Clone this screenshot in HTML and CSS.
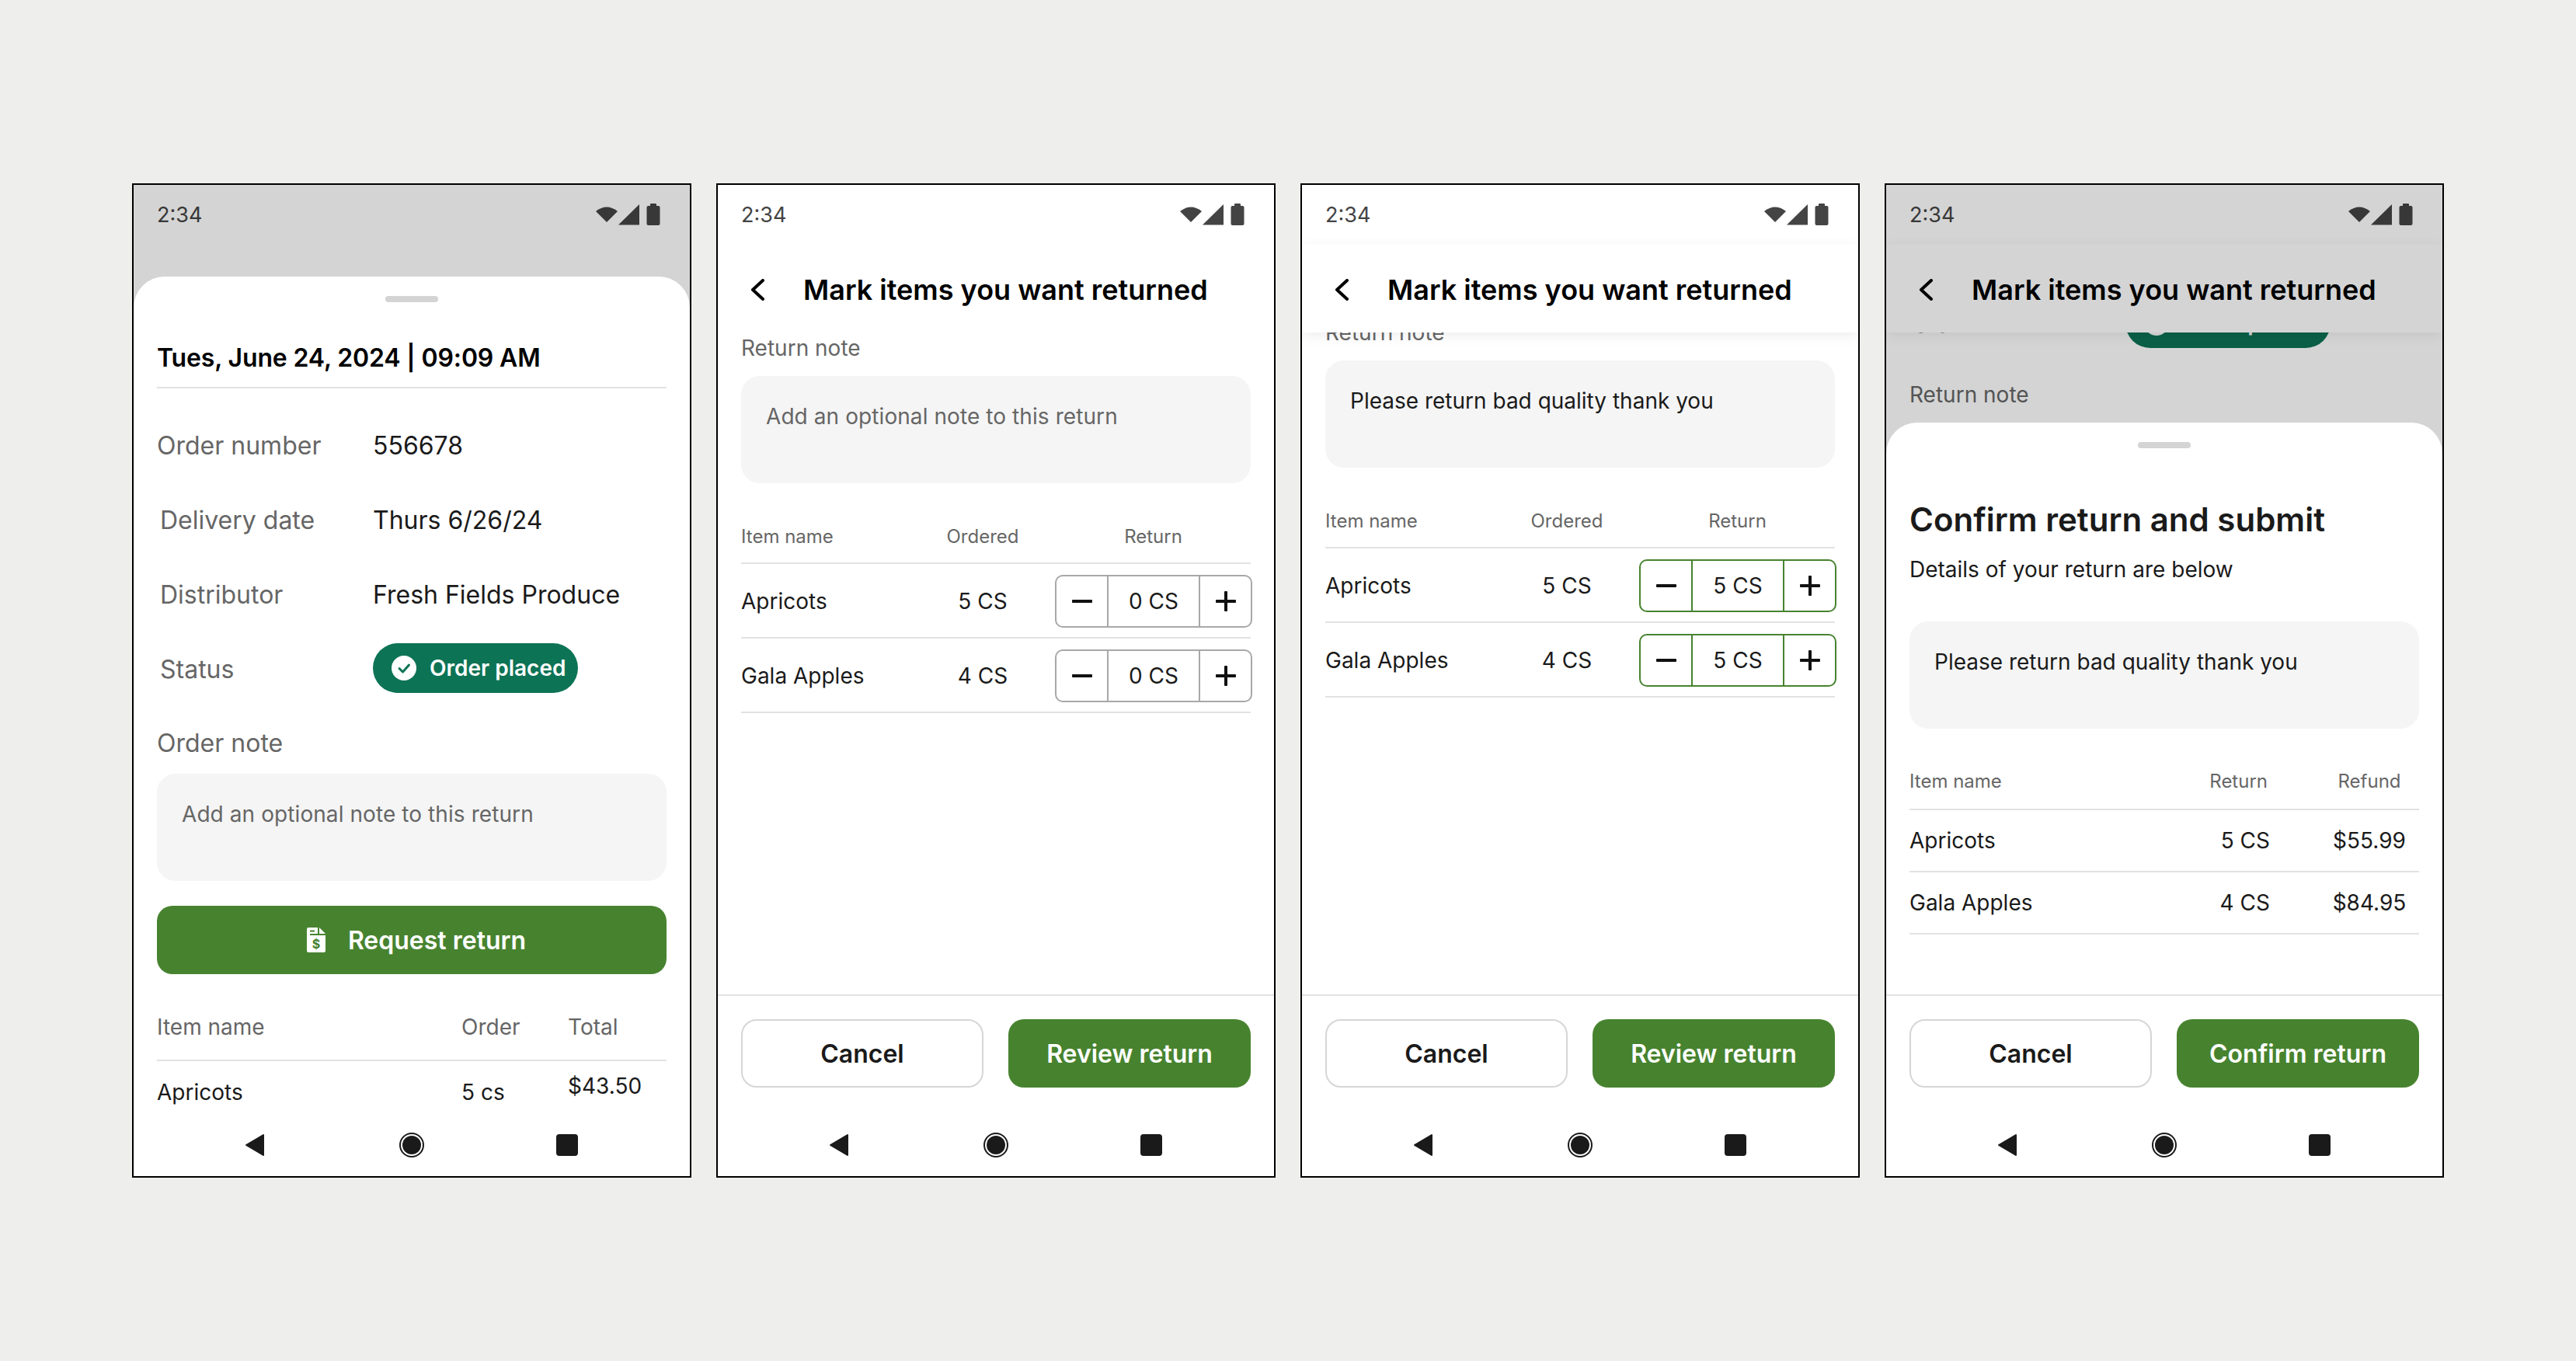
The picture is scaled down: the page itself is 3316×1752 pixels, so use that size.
FILE: index.html
```html
<!DOCTYPE html>
<html lang="en">
<head>
  <meta charset="UTF-8">
  <meta name="viewport" content="width=device-width, initial-scale=1.0">
  <title>Return flow</title>
  <link rel="stylesheet" href="styles.css">
</head>
<body>
  <svg class="defs" width="0" height="0" aria-hidden="true">
    <symbol id="status-icons" viewBox="0 0 84 28">
      <path d="M0 10Q14-1 28 10L14 24Z"/>
      <path d="M29 27.500L56 1V27.500Z"/>
      <rect x="65.500" y="3" width="17" height="25" rx="2"/>
      <rect x="70" y="0" width="8" height="4" rx="1"/>
    </symbol>
    <symbol id="nav-back" viewBox="0 0 32 32">
      <path d="M3 16L25 3V29Z" stroke-linejoin="round" stroke-width="2" stroke="#1a1a1a"/>
    </symbol>
    <symbol id="nav-home" viewBox="0 0 32 32">
      <circle cx="16" cy="16" r="15" fill="#fff" stroke="#1a1a1a" stroke-width="2"/>
      <circle cx="16" cy="16" r="12"/>
    </symbol>
    <symbol id="nav-recent" viewBox="0 0 32 32">
      <rect x="2" y="2" width="28" height="28" rx="4"/>
    </symbol>
    <symbol id="chevron" viewBox="0 0 20 28">
      <path d="M17 2L4 14L17 26" fill="none" stroke="currentColor" stroke-width="4" stroke-linecap="round" stroke-linejoin="round"/>
    </symbol>
    <symbol id="minus" viewBox="0 0 26 26">
      <rect x="0" y="11" width="26" height="4" rx="1"/>
    </symbol>
    <symbol id="plus" viewBox="0 0 26 26">
      <rect x="0" y="11" width="26" height="4" rx="1"/>
      <rect x="11" y="0" width="4" height="26" rx="1"/>
    </symbol>
    <symbol id="pill-check" viewBox="0 0 32 32">
      <circle cx="16" cy="16" r="16" fill="#fff"/>
      <path d="M10 16.500L14.500 21L22.500 12" fill="none" stroke="#0d7355" stroke-width="3" stroke-linecap="round" stroke-linejoin="round"/>
    </symbol>
  </svg>

  <!-- order details -->
  <div class="phone">
    <div class="status-bar">
      <span>2:34</span>
      <svg class="status-icons"><use href="#status-icons"/></svg>
    </div>
    <div class="scrim"></div>
    <div class="sheet sheet-order">
      <div class="handle"></div>
      <div class="sheet-body">
        <div class="date-line">Tues, June 24, 2024 | 09:09 AM</div>
        <div class="info-row"><span class="info-label">Order number</span><span>556678</span></div>
        <div class="info-row"><span class="info-label nudged">Delivery date</span><span>Thurs 6/26/24</span></div>
        <div class="info-row"><span class="info-label nudged">Distributor</span><span>Fresh Fields Produce</span></div>
        <div class="info-row">
          <span class="info-label nudged">Status</span>
          <span class="pill">
            <svg class="pill-check"><use href="#pill-check"/></svg>
            Order placed
          </span>
        </div>
        <div class="section-label order-note-label">Order note</div>
        <div class="note-box placeholder">Add an optional note to this return</div>
        <button class="btn btn-primary btn-wide">
          <svg class="doc-icon" viewBox="0 0 24 32">
            <path fill="#fff" d="M2 0H14V10H24V30a2 2 0 0 1-2 2H2a2 2 0 0 1-2-2V2a2 2 0 0 1 2-2Z"/>
            <path fill="#fff" d="M16 0L24 8H16Z"/>
            <rect x="4" y="3.500" width="6" height="2" fill="#47832f"/>
            <rect x="4" y="8" width="10" height="2" fill="#47832f"/>
            <text x="12" y="27" class="doc-dollar">$</text>
          </svg>
          Request return
        </button>
        <div class="order-table order-head"><span>Item name</span><span>Order</span><span>Total</span></div>
        <div class="order-table order-row"><span>Apricots</span><span>5 cs</span><span class="lifted">$43.50</span></div>
      </div>
      <div class="nav-bar">
        <svg><use href="#nav-back"/></svg>
        <svg><use href="#nav-home"/></svg>
        <svg><use href="#nav-recent"/></svg>
      </div>
    </div>
  </div>

  <!-- mark items, empty -->
  <div class="phone">
    <div class="status-bar">
      <span>2:34</span>
      <svg class="status-icons"><use href="#status-icons"/></svg>
    </div>
    <div class="app-header">
      <svg class="back-icon"><use href="#chevron"/></svg>
      <div class="app-title">Mark items you want returned</div>
    </div>
    <div class="scroll">
      <div class="section-label">Return note</div>
      <div class="note-box placeholder">Add an optional note to this return</div>
      <div class="mark-table mark-head"><span>Item name</span><span class="center">Ordered</span><span class="center">Return</span></div>
      <div class="mark-table mark-row">
        <span>Apricots</span><span class="center">5 CS</span>
        <div class="stepper">
          <div class="step-btn"><svg><use href="#minus"/></svg></div>
          <div class="step-value">0 CS</div>
          <div class="step-btn"><svg><use href="#plus"/></svg></div>
        </div>
      </div>
      <div class="mark-table mark-row">
        <span>Gala Apples</span><span class="center">4 CS</span>
        <div class="stepper">
          <div class="step-btn"><svg><use href="#minus"/></svg></div>
          <div class="step-value">0 CS</div>
          <div class="step-btn"><svg><use href="#plus"/></svg></div>
        </div>
      </div>
    </div>
    <div class="footer">
      <button class="btn btn-outline">Cancel</button>
      <button class="btn btn-primary">Review return</button>
    </div>
    <div class="nav-bar">
      <svg><use href="#nav-back"/></svg>
      <svg><use href="#nav-home"/></svg>
      <svg><use href="#nav-recent"/></svg>
    </div>
  </div>

  <!-- mark items, filled and scrolled -->
  <div class="phone">
    <div class="status-bar">
      <span>2:34</span>
      <svg class="status-icons"><use href="#status-icons"/></svg>
    </div>
    <div class="app-header raised">
      <svg class="back-icon"><use href="#chevron"/></svg>
      <div class="app-title">Mark items you want returned</div>
    </div>
    <div class="scroll">
      <div class="section-label scrolled">Return note</div>
      <div class="note-box">Please return bad quality thank you</div>
      <div class="mark-table mark-head"><span>Item name</span><span class="center">Ordered</span><span class="center">Return</span></div>
      <div class="mark-table mark-row">
        <span>Apricots</span><span class="center">5 CS</span>
        <div class="stepper active">
          <div class="step-btn"><svg><use href="#minus"/></svg></div>
          <div class="step-value">5 CS</div>
          <div class="step-btn"><svg><use href="#plus"/></svg></div>
        </div>
      </div>
      <div class="mark-table mark-row">
        <span>Gala Apples</span><span class="center">4 CS</span>
        <div class="stepper active">
          <div class="step-btn"><svg><use href="#minus"/></svg></div>
          <div class="step-value">5 CS</div>
          <div class="step-btn"><svg><use href="#plus"/></svg></div>
        </div>
      </div>
    </div>
    <div class="footer">
      <button class="btn btn-outline">Cancel</button>
      <button class="btn btn-primary">Review return</button>
    </div>
    <div class="nav-bar">
      <svg><use href="#nav-back"/></svg>
      <svg><use href="#nav-home"/></svg>
      <svg><use href="#nav-recent"/></svg>
    </div>
  </div>

  <!-- confirm sheet -->
  <div class="phone">
    <div class="status-bar">
      <span>2:34</span>
      <svg class="status-icons"><use href="#status-icons"/></svg>
    </div>
    <div class="app-header raised">
      <svg class="back-icon"><use href="#chevron"/></svg>
      <div class="app-title">Mark items you want returned</div>
    </div>
    <div class="scroll">
      <div class="info-row behind">
        <span class="info-label nudged">Status</span>
        <span class="pill">
          <svg class="pill-check"><use href="#pill-check"/></svg>
          Order placed
        </span>
      </div>
      <div class="section-label behind-note">Return note</div>
    </div>
    <div class="scrim"></div>
    <div class="sheet sheet-confirm">
      <div class="handle"></div>
      <div class="sheet-body">
        <div class="sheet-title">Confirm return and submit</div>
        <div class="sheet-desc">Details of your return are below</div>
        <div class="note-box confirm-note">Please return bad quality thank you</div>
        <div class="refund-table refund-head"><span>Item name</span><span class="right">Return</span><span class="center">Refund</span></div>
        <div class="refund-table refund-row"><span>Apricots</span><span class="right">5 CS</span><span class="center">$55.99</span></div>
        <div class="refund-table refund-row"><span>Gala Apples</span><span class="right">4 CS</span><span class="center">$84.95</span></div>
      </div>
      <div class="footer">
        <button class="btn btn-outline">Cancel</button>
        <button class="btn btn-primary">Confirm return</button>
      </div>
      <div class="nav-bar">
        <svg><use href="#nav-back"/></svg>
        <svg><use href="#nav-home"/></svg>
        <svg><use href="#nav-recent"/></svg>
      </div>
    </div>
  </div>
</body>
</html>
```

FILE: styles.css
```css
body {
  margin: 0;
  height: 100vh;
  display: flex;
  justify-content: center;
  align-items: center;
  gap: 32px;
  font-family: 'Inter', sans-serif;
  color: #1a1a1a;
  background-color: #eeeeec;
}

.defs {
  position: absolute;
}

.phone {
  position: relative;
  width: 720px;
  height: 1280px;
  box-sizing: border-box;
  display: flex;
  flex-direction: column;
  overflow: hidden;
  border: 2px solid #000;
  background-color: white;
}

.status-bar {
  height: 76px;
  flex-shrink: 0;
  box-sizing: border-box;
  display: flex;
  justify-content: space-between;
  align-items: center;
  padding: 0 37px 0 30px;
  font-size: 27px;
  color: #444;
}

.status-icons {
  width: 84px;
  height: 28px;
  fill: #444;
}

.app-header {
  position: relative;
  z-index: 1;
  height: 114px;
  flex-shrink: 0;
  box-sizing: border-box;
  display: flex;
  align-items: center;
  padding: 4px 0 0 41px;
  background-color: white;
}

.app-header.raised {
  box-shadow: 0 4px 16px rgba(0, 0, 0, 0.07);
}

.back-icon {
  width: 20px;
  height: 28px;
  margin-right: 49px;
  color: #000;
}

.app-title {
  font-size: 36px;
  font-weight: 600;
  color: #000;
}

.scroll {
  flex: 1;
  overflow: hidden;
  padding: 0 30px;
}

.scrolled {
  margin-top: -20px;
}

.section-label {
  font-size: 28px;
  line-height: 40px;
  color: #666;
}

.note-box {
  height: 138px;
  box-sizing: border-box;
  margin-top: 16px;
  padding: 32px 32px 0;
  font-size: 28px;
  line-height: 40px;
  background-color: #f5f5f5;
  border-radius: 24px;
}

.note-box.placeholder {
  color: #666;
  letter-spacing: 0.08px;
}

/* mark items table */
.mark-table {
  display: grid;
  grid-template-columns: 218px 180px 253px;
  column-gap: 3px;
  align-items: center;
  border-bottom: 2px solid #e2e2e2;
}

.center {
  text-align: center;
}

.right {
  text-align: right;
}

.mark-head {
  margin-top: 51px;
  padding-bottom: 15px;
  font-size: 24px;
  line-height: 36px;
  color: #666;
}

.mark-row {
  height: 96px;
  box-sizing: border-box;
  padding-top: 2px;
  font-size: 28px;
}

.stepper {
  height: 68px;
  width: 254px;
  box-sizing: border-box;
  display: grid;
  grid-template-columns: 65px 1fr 65px;
  border: 2px solid #a8a8a8;
  border-radius: 10px;
}

.stepper.active {
  border-color: #47832f;
}

.step-btn {
  display: flex;
  justify-content: center;
  align-items: center;
}

.step-btn svg {
  width: 26px;
  height: 26px;
  fill: #111;
}

.step-value {
  display: flex;
  justify-content: center;
  align-items: center;
  border-left: 2px solid #a8a8a8;
  border-right: 2px solid #a8a8a8;
}

.active .step-value {
  border-color: #47832f;
}

/* bottom actions */
.footer {
  flex-shrink: 0;
  display: grid;
  grid-template-columns: 1fr 1fr;
  gap: 32px;
  padding: 30px 30px 38px;
  border-top: 2px solid #e2e2e2;
}

.btn {
  height: 88px;
  box-sizing: border-box;
  display: flex;
  justify-content: center;
  align-items: center;
  padding: 0;
  font-family: inherit;
  font-size: 32px;
  font-weight: 600;
  border-radius: 20px;
  border: none;
}

.btn-primary {
  color: white;
  background-color: #47832f;
}

.btn-outline {
  color: #1a1a1a;
  background-color: white;
  border: 2px solid #d6d6d6;
}

.btn-wide {
  width: 100%;
  margin-top: 32px;
  padding-left: 12px;
}

.doc-icon {
  width: 24px;
  height: 32px;
  margin-right: 29px;
}

.doc-dollar {
  font-size: 16px;
  font-weight: 700;
  text-anchor: middle;
  fill: #47832f;
}

.nav-bar {
  height: 76px;
  flex-shrink: 0;
  box-sizing: border-box;
  display: flex;
  justify-content: center;
  align-items: center;
  gap: 168px;
  padding-bottom: 4px;
  background-color: white;
}

.nav-bar svg {
  width: 32px;
  height: 32px;
  fill: #1a1a1a;
}

/* dim layer and bottom sheets */
.scrim {
  position: absolute;
  inset: 0;
  z-index: 2;
  background-color: rgba(0, 0, 0, 0.17);
}

.sheet {
  position: absolute;
  left: 0;
  right: 0;
  bottom: 0;
  z-index: 3;
  display: flex;
  flex-direction: column;
  background-color: white;
  border-top-left-radius: 40px;
  border-top-right-radius: 40px;
}

.sheet-order {
  top: 118px;
}

.sheet-confirm {
  top: 306px;
}

.handle {
  width: 68px;
  height: 8px;
  flex-shrink: 0;
  margin: 25px auto 0;
  border-radius: 4px;
  background-color: #d4d4d4;
}

.sheet-body {
  flex: 1;
  overflow: hidden;
  padding: 0 30px;
}

.date-line {
  margin-top: 50px;
  padding-bottom: 15px;
  font-size: 32px;
  line-height: 44px;
  font-weight: 600;
  letter-spacing: -0.15px;
  color: #000;
  border-bottom: 2px solid #e2e2e2;
}

.info-row {
  height: 96px;
  display: flex;
  align-items: center;
  font-size: 32px;
}

.date-line + .info-row {
  margin-top: 25px;
}

.info-label {
  width: 278px;
  flex-shrink: 0;
  color: #666;
}

.info-label.nudged {
  padding-left: 4px;
  box-sizing: border-box;
}

.pill {
  height: 64px;
  width: 264px;
  box-sizing: border-box;
  display: flex;
  align-items: center;
  gap: 17px;
  margin-top: -2px;
  padding-left: 24px;
  font-size: 28px;
  font-weight: 600;
  color: white;
  background-color: #0d7355;
  border-radius: 32px;
}

.pill-check {
  width: 32px;
  height: 32px;
}

.order-note-label {
  margin-top: 28px;
  font-size: 32px;
}

.order-note-label + .note-box {
  margin-top: 19px;
}

.order-table {
  display: grid;
  grid-template-columns: 392px 137px 1fr;
  font-size: 28px;
  line-height: 36px;
}

.order-head {
  margin-top: 50px;
  padding-bottom: 24px;
  color: #666;
  border-bottom: 2px solid #e2e2e2;
}

.order-row {
  margin-top: 22px;
}

.lifted {
  margin-top: -8px;
}

.sheet-title {
  margin-top: 66px;
  font-size: 42px;
  line-height: 52px;
  font-weight: 600;
}

.sheet-desc {
  margin-top: 18px;
  font-size: 28px;
  line-height: 40px;
}

.confirm-note {
  margin-top: 47px;
}

.refund-table {
  display: grid;
  grid-template-columns: 290px 100px 120px;
  column-gap: 71px;
  align-items: center;
  border-bottom: 2px solid #e2e2e2;
}

.refund-head {
  margin-top: 50px;
  padding-bottom: 17px;
  font-size: 24px;
  line-height: 36px;
  color: #666;
}

.refund-row {
  height: 80px;
  box-sizing: border-box;
  font-size: 28px;
}

.refund-row .right {
  margin-right: -3px;
}

.behind {
  height: 64px;
  margin-top: -44px;
}

.behind .pill {
  margin-top: 0;
}

.behind-note {
  margin-top: 40px;
}
```
